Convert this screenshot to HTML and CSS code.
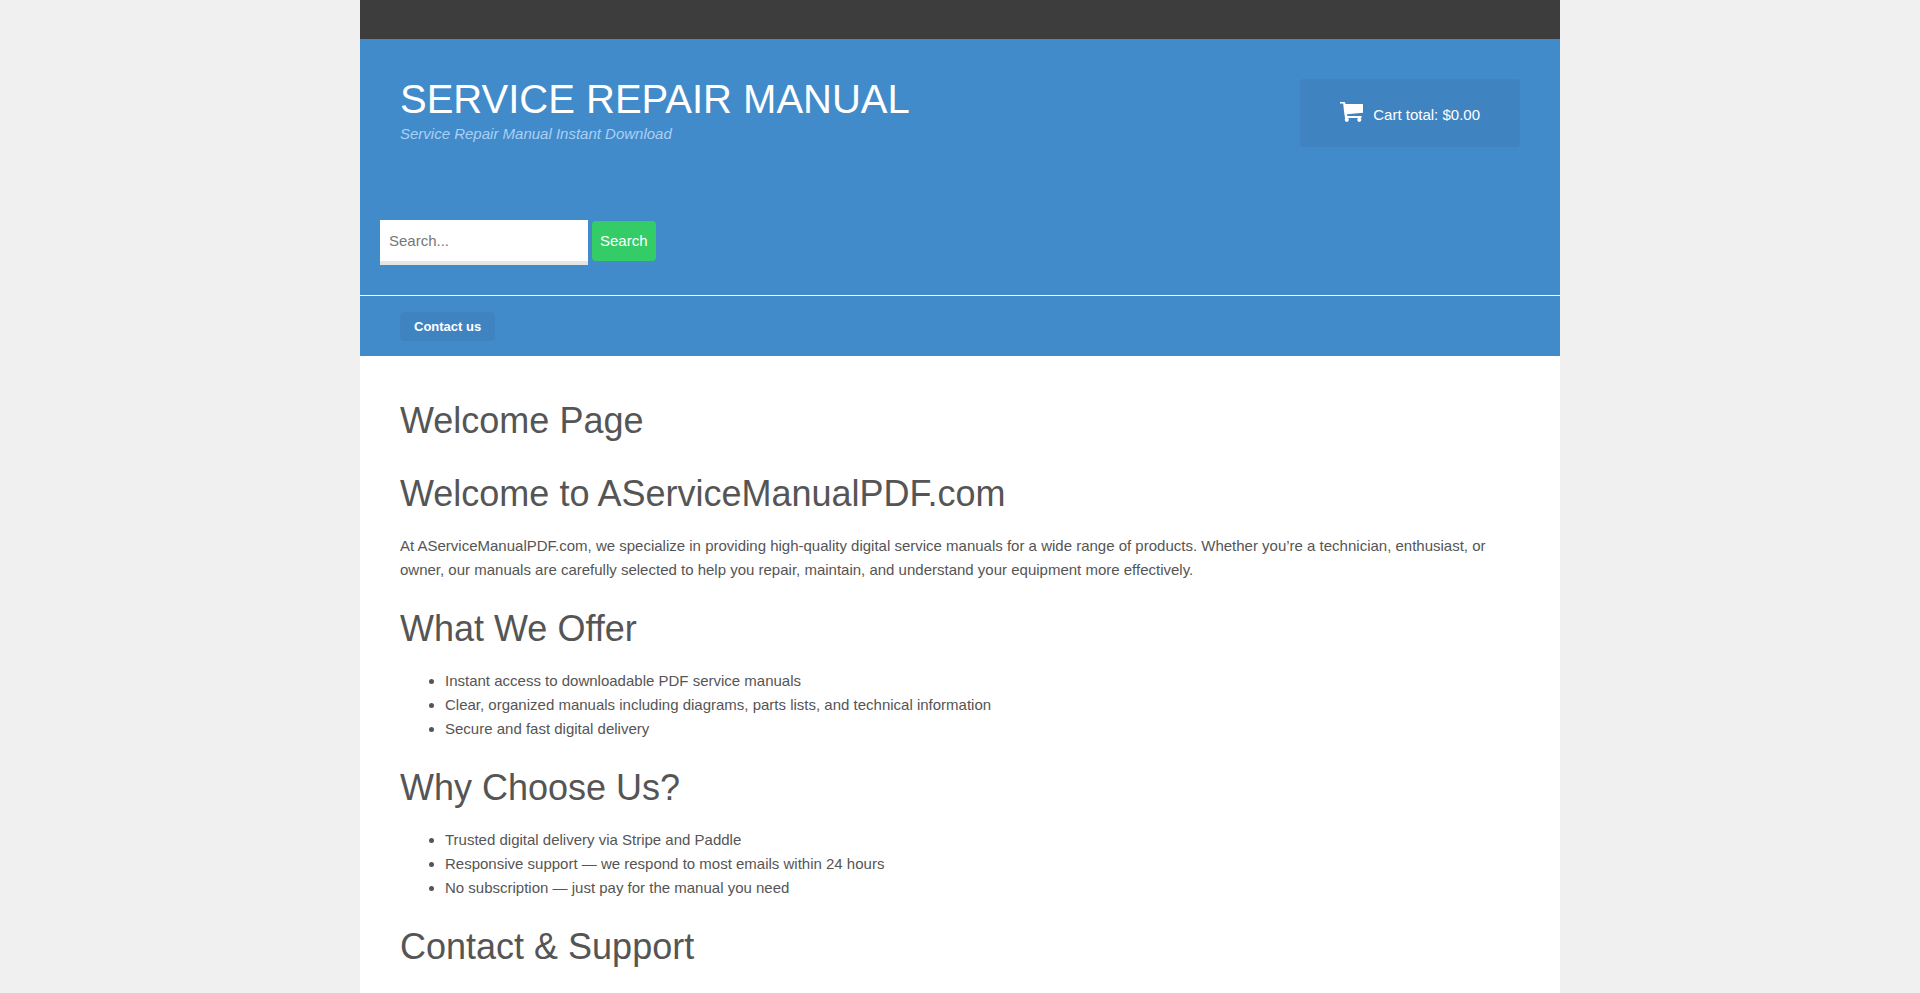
FILE: index.html
```html
<!DOCTYPE html>
<html lang="en">
<head>
    <meta charset="UTF-8">
    <meta name="viewport" content="width=device-width, initial-scale=1.0">
    <title>Welcome Page - Service Repair Manual</title>
    <link rel="stylesheet" href="styles.css">
</head>
<body>
    <div class="site">
        <div class="top-bar"></div>

        <header class="header">
            <div class="header-main">
                <div class="branding">
                    <a href="#" class="site-title">SERVICE REPAIR MANUAL</a>
                    <p class="tagline">Service Repair Manual Instant Download</p>
                </div>
                <a href="#" class="cart">
                    <svg class="cart-icon" viewBox="0 0 23 20" aria-hidden="true">
                        <path d="M0 0h4.800l.8 2H23v8.800L7 12.300l.3 1.700H21.500v2H5L4 9.500 3.200 1.600H0z"/>
                        <path d="M5 14h2v4H5z"/>
                        <circle cx="6.800" cy="17.800" r="2.100"/>
                        <circle cx="19.300" cy="17.800" r="2.100"/>
                    </svg>
                    <span>Cart total: $0.00</span>
                </a>
            </div>

            <form class="search" onsubmit="return false">
                <input type="text" class="search-input" placeholder="Search..." aria-label="Search">
                <button type="submit" class="search-button">Search</button>
            </form>

            <nav class="nav">
                <a href="#">Contact us</a>
            </nav>
        </header>

        <main class="content">
            <h1>Welcome Page</h1>

            <h2>Welcome to AServiceManualPDF.com</h2>
            <p>At AServiceManualPDF.com, we specialize in providing high-quality digital service manuals for a wide range of products. Whether you’re a technician, enthusiast, or owner, our manuals are carefully selected to help you repair, maintain, and understand your equipment more effectively.</p>

            <h2>What We Offer</h2>
            <ul>
                <li>Instant access to downloadable PDF service manuals</li>
                <li>Clear, organized manuals including diagrams, parts lists, and technical information</li>
                <li>Secure and fast digital delivery</li>
            </ul>

            <h2>Why Choose Us?</h2>
            <ul>
                <li>Trusted digital delivery via Stripe and Paddle</li>
                <li>Responsive support — we respond to most emails within 24 hours</li>
                <li>No subscription — just pay for the manual you need</li>
            </ul>

            <h2>Contact &amp; Support</h2>
        </main>
    </div>
</body>
</html>
```
FILE: styles.css
```css
* {
    margin: 0;
    padding: 0;
    box-sizing: border-box;
}

body {
    background: #f0f0f0;
    color: #555;
    font-family: "Liberation Sans", Arial, sans-serif;
    font-size: 15px;
    line-height: 24px;
}

.site {
    max-width: 1200px;
    min-height: 100vh;
    margin: 0 auto;
    background: #fff;
}

.top-bar {
    height: 39px;
    background: #3d3d3d;
}

/* Header */
.header {
    background: #428bca;
    color: #fff;
}

.header-main {
    display: flex;
    justify-content: space-between;
    align-items: flex-start;
    flex-wrap: wrap;
    gap: 20px;
    padding: 40px 40px 73px;
}

.site-title {
    display: block;
    color: #fff;
    font-size: 40px;
    line-height: 40px;
    text-decoration: none;
}

.tagline {
    margin-top: 3px;
    color: #a9d0f5;
    font-style: italic;
}

.cart {
    display: flex;
    align-items: flex-start;
    gap: 10px;
    padding: 23px 40px 20px;
    border-radius: 4px;
    background: #3f84c1;
    color: #fff;
    text-decoration: none;
}

.cart span {
    padding-top: 1px;
}

.cart-icon {
    width: 23px;
    height: 20px;
    fill: #fff;
}

/* Search */
.search {
    display: flex;
    align-items: flex-start;
    gap: 4px;
    padding: 0 20px 30px;
}

.search-input {
    width: 208px;
    height: 45px;
    padding: 0 9px;
    border: 0;
    border-bottom: 4px solid #e5e5e5;
    background: #fff;
    color: #555;
    font: inherit;
}

.search-input::placeholder {
    color: #777;
}

.search-button {
    height: 40px;
    margin-top: 1px;
    padding: 0 8px;
    border: 0;
    border-radius: 4px;
    background: #33cc66;
    color: #fff;
    font: inherit;
    cursor: pointer;
}

/* Navigation */
.nav {
    display: flex;
    padding: 16px 40px 15px;
    border-top: 1px solid #fff;
}

.nav a {
    padding: 0 14px;
    border-radius: 4px;
    background: #3f84c1;
    color: #fff;
    font-size: 13px;
    font-weight: bold;
    line-height: 29px;
    text-decoration: none;
}

/* Content */
.content {
    padding: 43px 40px 40px;
}

.content h1,
.content h2 {
    font-size: 36px;
    font-weight: normal;
    line-height: 44px;
}

.content h1 {
    margin-bottom: 29px;
}

.content h2 {
    margin: 25px 0 18px;
}

.content ul {
    padding-left: 45px;
}
```
